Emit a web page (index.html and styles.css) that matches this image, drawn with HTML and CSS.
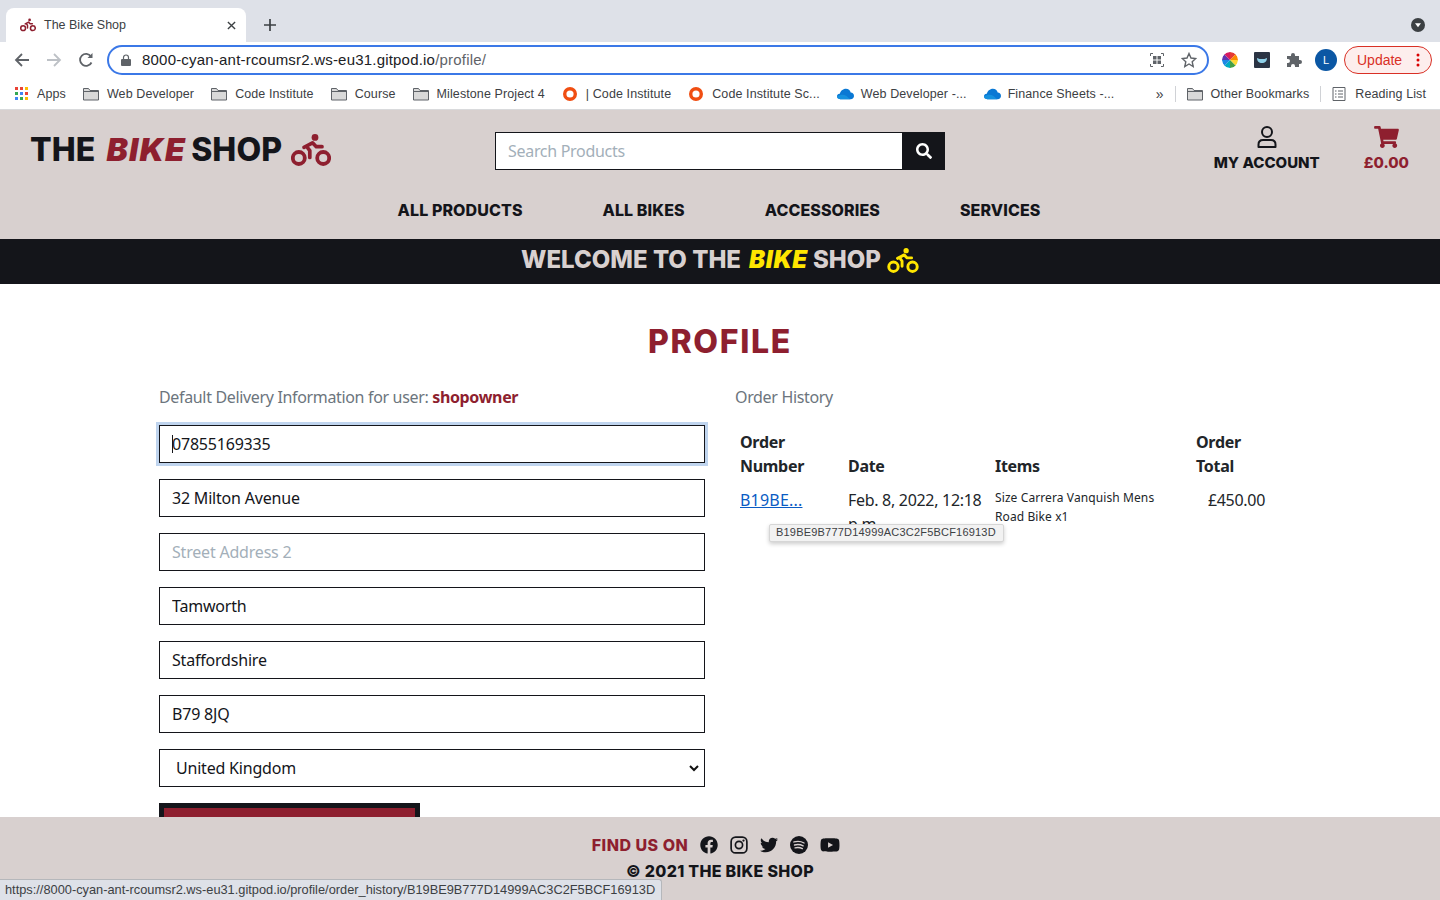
FILE: index.html
```html
<!DOCTYPE html>
<html lang="en">
<head>
    <meta charset="UTF-8">
    <title>The Bike Shop</title>
    <link rel="stylesheet" href="styles.css">
</head>
<body>
<svg class="defs" width="0" height="0">
    <symbol id="biker" viewBox="0 0 40 32">
        <circle cx="24" cy="3.4" r="3.4" fill="currentColor"/>
        <circle cx="7.8" cy="24" r="6" fill="none" stroke="currentColor" stroke-width="3.8"/>
        <circle cx="32.200" cy="24" r="6" fill="none" stroke="currentColor" stroke-width="3.800"/>
        <path d="M13 13.300L21.500 8.800L25.300 12.700H31M16 13L18.800 16.700V23.500" fill="none" stroke="currentColor" stroke-width="3.700" stroke-linecap="round" stroke-linejoin="round"/>
    </symbol>
    <symbol id="folder" viewBox="0 0 16 14">
        <path d="M.5 1.5h5l1.5 2h8.500v9.500h-15z" fill="#d9d9d9" stroke="#5f6368"/>
        <path d="M.5 4.500h15" stroke="#5f6368"/>
    </symbol>
    <symbol id="ring" viewBox="0 0 16 16">
        <circle cx="8" cy="8" r="5.300" fill="none" stroke="#f04e12" stroke-width="3.400"/>
    </symbol>
    <symbol id="cloud" viewBox="0 0 18 12">
        <path d="M3.500 11.500C1 11.500 0 10 0 8.500C0 6.800 1.500 5.500 3 5.800C4 2 7 .5 9.500 .5C12 .5 14 2 14.500 4.500C16.500 4.700 18 6.200 18 8C18 10 16.500 11.500 14.500 11.500z" fill="#0a78d4"/>
        <path d="M3.500 11.500C1 11.500 0 10 0 8.500C3 6.500 7 6 10 8L14 11.500z" fill="#1490df"/>
    </symbol>
</svg>

<!-- browser top -->
<div class="tabs">
    <div class="tab">
        <svg class="tabIcon"><use href="#biker"/></svg>
        <span class="tabTitle">The Bike Shop</span>
        <svg class="tabClose" viewBox="0 0 10 10"><path d="M1 1l8 8M9 1l-8 8" stroke="#3c4043" stroke-width="1.500"/></svg>
    </div>
    <svg class="newTab" viewBox="0 0 12 12"><path d="M6 0v12M0 6h12" stroke="#3c4043" stroke-width="1.700"/></svg>
    <div class="tabSearch"><svg viewBox="0 0 14 14"><circle cx="7" cy="7" r="7" fill="#3c4043"/><path d="M4 5.300h6l-3 4z" fill="#fff"/></svg></div>
</div>
<div class="toolbar">
    <svg class="navIcon" viewBox="0 0 16 16"><path d="M15 8H2M8 2L2 8l6 6" fill="none" stroke="#5f6368" stroke-width="1.800"/></svg>
    <svg class="navIcon" viewBox="0 0 16 16"><path d="M1 8h13M8 2l6 6-6 6" fill="none" stroke="#bdc1c6" stroke-width="1.800"/></svg>
    <svg class="navIcon" viewBox="0 0 16 16"><path d="M13.500 10.500A6 6 0 1 1 13 4.500" fill="none" stroke="#5f6368" stroke-width="1.800"/><path d="M14.500 1v5h-5z" fill="#5f6368"/></svg>
    <div class="omnibox">
        <svg class="lock" viewBox="0 0 10 12"><path d="M2.500 5V3.500a2.500 2.500 0 0 1 5 0V5" fill="none" stroke="#5f6368" stroke-width="1.200"/><rect y="5" width="10" height="7" rx="1" fill="#5f6368"/></svg>
        <span class="url">8000-cyan-ant-rcoumsr2.ws-eu31.gitpod.io<span class="urlPath">/profile/</span></span>
        <svg class="qr" viewBox="0 0 14 14"><path d="M.5 3V.5H3M11 .5h2.500V3M13.500 11v2.500H11M3 13.500H.5V11" fill="none" stroke="#5f6368"/><rect x="3" y="3" width="3.500" height="3.500" fill="#5f6368"/><rect x="7.500" y="3" width="3.500" height="3.500" fill="#5f6368"/><rect x="3" y="7.500" width="3.500" height="3.500" fill="#5f6368"/><rect x="7.500" y="7.500" width="3.500" height="3.500" fill="#5f6368"/></svg>
        <svg class="star" viewBox="0 0 16 16"><path d="M8 1.500l2 4.500 4.800.5-3.600 3.200 1 4.800L8 12l-4.200 2.500 1-4.800L1.200 6.500 6 6z" fill="none" stroke="#5f6368" stroke-width="1.400"/></svg>
    </div>
    <svg class="extIcon wheel" viewBox="0 0 16 16"><path d="M8 8V0a8 8 0 0 1 5.700 2.300z" fill="#e53935"/><path d="M8 8l5.700-5.700A8 8 0 0 1 16 8z" fill="#fb8c00"/><path d="M8 8h8a8 8 0 0 1-2.300 5.700z" fill="#fdd835"/><path d="M8 8l5.700 5.700A8 8 0 0 1 8 16z" fill="#43a047"/><path d="M8 8v8a8 8 0 0 1-5.700-2.300z" fill="#00acc1"/><path d="M8 8l-5.700 5.700A8 8 0 0 1 0 8z" fill="#1e88e5"/><path d="M8 8H0a8 8 0 0 1 2.300-5.700z" fill="#5e35b1"/><path d="M8 8L2.300 2.300A8 8 0 0 1 8 0z" fill="#d81b60"/></svg>
    <svg class="extIcon" viewBox="0 0 16 16"><rect width="16" height="16" rx="1" fill="#2b3444"/><path d="M3 6c2 1 3 1 5 1s3 0 5-1c0 3-2 5-5 5s-5-2-5-5z" fill="#8fd0e8"/></svg>
    <svg class="extIcon" viewBox="0 0 16 16"><path d="M1 4h4V3a2 2 0 0 1 4 0v1h4v4h1a2 2 0 0 1 0 4h-1v3H9v-1a2 2 0 0 0-4 0v1H1v-4h1a2 2 0 0 0 0-4H1z" fill="#5f6368"/></svg>
    <div class="avatar">L</div>
    <div class="update">
        <span>Update</span>
        <svg class="dots" viewBox="0 0 4 14"><circle cx="2" cy="2" r="1.500"/><circle cx="2" cy="7" r="1.500"/><circle cx="2" cy="12" r="1.500"/></svg>
    </div>
</div>
<div class="bookmarks">
    <div class="mark">
        <svg class="appsIcon" viewBox="0 0 14 14">
            <g fill="#ea4335"><rect width="3" height="3"/><rect x="5" width="3" height="3"/></g><rect x="10" width="3" height="3" fill="#fbbc04"/>
            <g fill="#34a853"><rect y="5" width="3" height="3"/></g><rect x="5" y="5" width="3" height="3" fill="#4285f4"/><rect x="10" y="5" width="3" height="3" fill="#ea4335"/>
            <g fill="#4285f4"><rect y="10" width="3" height="3"/></g><rect x="5" y="10" width="3" height="3" fill="#34a853"/><rect x="10" y="10" width="3" height="3" fill="#fbbc04"/>
        </svg>Apps
    </div>
    <div class="mark"><svg class="folder"><use href="#folder"/></svg>Web Developer</div>
    <div class="mark"><svg class="folder"><use href="#folder"/></svg>Code Institute</div>
    <div class="mark"><svg class="folder"><use href="#folder"/></svg>Course</div>
    <div class="mark"><svg class="folder"><use href="#folder"/></svg>Milestone Project 4</div>
    <div class="mark"><svg class="ring"><use href="#ring"/></svg>| Code Institute</div>
    <div class="mark"><svg class="ring"><use href="#ring"/></svg>Code Institute Sc...</div>
    <div class="mark"><svg class="cloud"><use href="#cloud"/></svg>Web Developer -...</div>
    <div class="mark"><svg class="cloud"><use href="#cloud"/></svg>Finance Sheets -...</div>
    <div class="marksEnd">
        <span class="more">»</span>
        <span class="markSep"></span>
        <div class="mark"><svg class="folder"><use href="#folder"/></svg>Other Bookmarks</div>
        <span class="markSep"></span>
        <div class="mark"><svg class="listIcon" viewBox="0 0 14 14"><path d="M1 .5h12v13H1z" fill="none" stroke="#5f6368"/><path d="M3 4h1.500M6 4h5M3 7h1.500M6 7h5M3 10h1.500M6 10h5" stroke="#5f6368"/></svg>Reading List</div>
    </div>
</div>

<!-- site header -->
<header class="siteHead">
    <div class="headTop">
        <a class="logo"><span>THE</span><em>BIKE</em><span>SHOP</span><svg class="logoBike"><use href="#biker"/></svg></a>
        <div class="search">
            <div class="searchBox">Search Products</div>
            <div class="searchBtn"><svg viewBox="0 0 512 512"><path fill="currentColor" d="M505 442.7L405.300 343c-4.500-4.500-10.600-7-17-7H372c27.600-35.300 44-79.700 44-128C416 93.100 322.900 0 208 0S0 93.100 0 208s93.100 208 208 208c48.300 0 92.700-16.400 128-44v16.300c0 6.400 2.500 12.500 7 17l99.700 99.700c9.400 9.400 24.600 9.400 33.900 0l28.300-28.300c9.400-9.400 9.400-24.600.1-34zM208 336c-70.700 0-128-57.200-128-128 0-70.700 57.200-128 128-128 70.700 0 128 57.200 128 128 0 70.700-57.200 128-128 128z"/></svg></div>
        </div>
        <div class="headLinks">
            <div class="headLink">
                <svg class="userIcon" viewBox="0 0 20 22"><circle cx="10" cy="6" r="5" fill="none" stroke="currentColor" stroke-width="2"/><path d="M1.500 21v-2.500c0-3 2-4.500 4.500-4.500h8c2.500 0 4.500 1.500 4.500 4.500V21z" fill="none" stroke="currentColor" stroke-width="2" stroke-linejoin="round"/></svg>
                <span>MY ACCOUNT</span>
            </div>
            <div class="headLink cart">
                <svg class="cartIcon" viewBox="0 0 576 512"><path fill="currentColor" d="M528.120 301.319l47.273-208C578.806 78.301 567.391 64 551.990 64H159.208l-9.166-44.810C147.758 8.021 137.930 0 126.529 0H24C10.745 0 0 10.745 0 24v16c0 13.255 10.745 24 24 24h69.883l70.248 343.435C147.325 417.100 136 435.222 136 456c0 30.928 25.072 56 56 56s56-25.072 56-56c0-15.674-6.447-29.835-16.824-40h209.647C430.447 426.165 424 440.326 424 456c0 30.928 25.072 56 56 56s56-25.072 56-56c0-22.172-12.888-41.332-31.579-50.405l5.517-24.276c3.413-15.018-8.002-29.319-23.403-29.319H218.117l-6.545-32h293.145c11.206 0 20.920-7.754 23.403-18.681z"/></svg>
                <span>£0.00</span>
            </div>
        </div>
    </div>
    <nav class="mainNav">
        <a>ALL PRODUCTS</a>
        <a>ALL BIKES</a>
        <a>ACCESSORIES</a>
        <a>SERVICES</a>
    </nav>
</header>
<div class="banner"><span>WELCOME TO THE</span><em>BIKE</em><span>SHOP</span><svg class="bannerBike"><use href="#biker"/></svg></div>

<!-- page content -->
<main class="content">
    <h1 class="pageTitle">PROFILE</h1>
    <div class="columns">
        <section class="formCol">
            <p class="colTitle">Default Delivery Information for user: <strong>shopowner</strong></p>
            <form class="profileForm">
                <input class="field isFocus" value="07855169335">
                <input class="field" value="32 Milton Avenue">
                <input class="field" placeholder="Street Address 2">
                <input class="field" value="Tamworth">
                <input class="field" value="Staffordshire">
                <input class="field" value="B79 8JQ">
                <div class="field selectField">
                    <span>United Kingdom</span>
                    <svg class="chevron" viewBox="0 0 10 7"><path d="M1 1l4 4 4-4" fill="none" stroke="#111" stroke-width="2"/></svg>
                </div>
                <div class="saveBtn"></div>
            </form>
        </section>
        <section class="historyCol">
            <p class="colTitle">Order History</p>
            <table class="orders">
                <thead>
                    <tr>
                        <th class="cNum">Order Number</th>
                        <th class="cDate">Date</th>
                        <th class="cItems">Items</th>
                        <th class="cTotal">Order Total</th>
                    </tr>
                </thead>
                <tbody>
                    <tr>
                        <td><a class="orderLink">B19BE...</a></td>
                        <td>Feb. 8, 2022, 12:18 p.m.</td>
                        <td class="itemsCell">Size Carrera Vanquish Mens Road Bike x1</td>
                        <td class="totalCell">£450.00</td>
                    </tr>
                </tbody>
            </table>
            <div class="tooltip">B19BE9B777D14999AC3C2F5BCF16913D</div>
        </section>
    </div>
</main>

<footer class="siteFoot">
    <div class="findUs">
        <span class="findText">FIND US ON</span>
        <svg class="social" viewBox="0 0 512 512"><path fill="currentColor" d="M504 256C504 119 393 8 256 8S8 119 8 256c0 123.780 90.690 226.380 209.250 245V327.690h-63V256h63v-54.640c0-62.150 37-96.480 93.670-96.480 27.140 0 55.520 4.840 55.520 4.840v61h-31.280c-30.800 0-40.410 19.120-40.410 38.730V256h68.780l-11 71.690h-57.780V501C413.310 482.380 504 379.780 504 256z"/></svg>
        <svg class="social" viewBox="0 0 16 16"><rect x="1" y="1" width="14" height="14" rx="4" fill="none" stroke="currentColor" stroke-width="1.500"/><circle cx="8" cy="8" r="3.200" fill="none" stroke="currentColor" stroke-width="1.500"/><circle cx="12" cy="4" r="1" fill="currentColor"/></svg>
        <svg class="social" viewBox="0 0 512 512"><path fill="currentColor" d="M459.370 151.716c.325 4.548.325 9.097.325 13.645 0 138.720-105.583 298.558-298.558 298.558-59.452 0-114.680-17.219-161.137-47.106 8.447.974 16.568 1.299 25.340 1.299 49.055 0 94.213-16.568 130.274-44.832-46.132-.975-84.792-31.188-98.112-72.772 6.498.974 12.995 1.624 19.818 1.624 9.421 0 18.843-1.300 27.614-3.573-48.081-9.747-84.143-51.980-84.143-102.985v-1.299c13.969 7.797 30.214 12.670 47.431 13.319-28.264-18.843-46.781-51.005-46.781-87.391 0-19.492 5.197-37.360 14.294-52.954 51.655 63.675 129.300 105.258 216.365 109.807-1.624-7.797-2.599-15.918-2.599-24.040 0-57.828 46.782-104.934 104.934-104.934 30.213 0 57.502 12.670 76.670 33.137 23.715-4.548 46.456-13.320 66.599-25.340-7.798 24.366-24.366 44.833-46.132 57.827 21.117-2.273 41.584-8.122 60.426-16.243-14.292 20.791-32.161 39.308-52.628 54.253z"/></svg>
        <svg class="social" viewBox="0 0 16 16"><circle cx="8" cy="8" r="8" fill="currentColor"/><path d="M3.500 5.300c3-.8 6.500-.5 9 .9M4 8c2.600-.7 5.500-.4 7.700.8M4.500 10.500c2.200-.5 4.600-.3 6.500.7" fill="none" stroke="#d8d0cf" stroke-width="1.200" stroke-linecap="round"/></svg>
        <svg class="social wide" viewBox="0 0 576 512"><path fill="currentColor" d="M549.655 124.083c-6.281-23.650-24.787-42.276-48.284-48.597C458.781 64 288 64 288 64S117.220 64 74.629 75.486c-23.497 6.322-42.003 24.947-48.284 48.597-11.412 42.867-11.412 132.305-11.412 132.305s0 89.438 11.412 132.305c6.281 23.650 24.787 41.500 48.284 47.821C117.220 448 288 448 288 448s170.780 0 213.371-11.486c23.497-6.321 42.003-24.171 48.284-47.821 11.412-42.867 11.412-132.305 11.412-132.305s0-89.438-11.412-132.305zm-317.510 213.508V175.185l142.739 81.205-142.739 81.201z"/></svg>
    </div>
    <div class="copyright">© 2021 THE BIKE SHOP</div>
</footer>
<div class="statusBar">https://8000-cyan-ant-rcoumsr2.ws-eu31.gitpod.io/profile/order_history/B19BE9B777D14999AC3C2F5BCF16913D</div>
</body>
</html>
```

FILE: styles.css
```css
*{
    box-sizing: border-box;
}
html,body{
    height: 100%;
}
body{
    margin: 0;
    height: 900px;
    overflow: hidden;
    display: flex;
    flex-direction: column;
    font-family: "Noto Sans", sans-serif;
    color: #212529;
    background: #fff;
}
.defs{
    position: absolute;
}
/*browser top*/
.tabs{
    height: 42px;
    flex: none;
    background: #dee1e8;
    display: flex;
    align-items: flex-end;
    padding-left: 6px;
}
.tab{
    width: 240px;
    height: 34px;
    background: #fff;
    border-radius: 8px 8px 0 0;
    display: flex;
    align-items: center;
    padding: 0 8px 0 14px;
    font: 12.5px "Liberation Sans", sans-serif;
    color: #3c4043;
}
.tabIcon{
    width: 16px;
    height: 14px;
    color: #8e1f2f;
    margin-right: 8px;
}
.tabTitle{
    flex: 1;
}
.tabClose{
    width: 9px;
    height: 9px;
    margin-right: 2px;
}
.newTab{
    width: 12px;
    height: 12px;
    margin: 0 0 11px 18px;
}
.tabSearch{
    margin: 0 15px 10px auto;
    height: 14px;
}
.tabSearch svg{
    width: 14px;
    height: 14px;
    display: block;
}
.toolbar{
    height: 36px;
    flex: none;
    background: #fff;
    display: flex;
    align-items: center;
    padding-left: 14px;
}
.navIcon{
    width: 16px;
    height: 16px;
    margin-right: 16px;
}
.omnibox{
    width: 1102px;
    height: 30px;
    margin-left: -3px;
    border: 2px solid #3b78e7;
    border-radius: 15px;
    display: flex;
    align-items: center;
    padding: 0 10px 0 12px;
}
.lock{
    width: 10px;
    height: 12px;
    margin-right: 11px;
}
.url{
    flex: 1;
    font: 15px "Liberation Sans", sans-serif;
    letter-spacing: .2px;
    color: #202124;
    padding-bottom: 1px;
}
.urlPath{
    color: #5f6368;
}
.qr{
    width: 14px;
    height: 14px;
    margin-right: 17px;
}
.star{
    width: 16px;
    height: 16px;
}
.extIcon{
    width: 16px;
    height: 16px;
    margin-left: 16px;
}
.wheel{
    margin-left: 13px;
    border-radius: 50%;
}
.avatar{
    width: 22px;
    height: 22px;
    margin-left: 13px;
    border-radius: 50%;
    background: #0b57a4;
    color: #fff;
    font: 11px/22px "Liberation Sans", sans-serif;
    text-align: center;
}
.update{
    width: 88px;
    height: 28px;
    margin-left: 7px;
    border: 1px solid #d93025;
    border-radius: 14px;
    background: #fdeeed;
    color: #d93025;
    font: 14px "Liberation Sans", sans-serif;
    display: flex;
    align-items: center;
    justify-content: space-between;
    padding: 0 11px 0 12px;
}
.dots{
    width: 4px;
    height: 14px;
    fill: #d90000;
}
.bookmarks{
    height: 32px;
    flex: none;
    background: #fff;
    border-bottom: 1px solid #d9dadc;
    display: flex;
    align-items: center;
    padding-left: 15px;
    gap: 17px;
    font: 12.5px "Liberation Sans", sans-serif;
    letter-spacing: .1px;
    color: #3c4043;
}
.mark{
    display: flex;
    align-items: center;
    white-space: nowrap;
}
.appsIcon{
    width: 14px;
    height: 14px;
    margin-right: 8px;
}
.folder{
    width: 16px;
    height: 14px;
    margin-right: 8px;
}
.ring{
    width: 16px;
    height: 16px;
    margin-right: 8px;
}
.cloud{
    width: 17px;
    height: 12px;
    margin-right: 7px;
}
.listIcon{
    width: 14px;
    height: 14px;
    margin-right: 9px;
}
.marksEnd{
    margin-left: auto;
    display: flex;
    align-items: center;
    gap: 11px;
    padding-right: 14px;
}
.more{
    font-size: 14px;
}
.markSep{
    width: 1px;
    height: 16px;
    background: #d0d2d6;
}
/*site header*/
.siteHead{
    flex: none;
    height: 129px;
    background: #d8d0cf;
    color: #14151a;
    font-family: Inter, sans-serif;
    font-weight: 800;
}
.headTop{
    display: grid;
    grid-template-columns: 1fr 450px 1fr;
    align-items: center;
    height: 80px;
    padding: 0 31px 0 30px;
}
.logo{
    font-size: 32px;
    line-height: 1;
    white-space: nowrap;
    display: flex;
    align-items: center;
    letter-spacing: .1px;
}
.logo em,.banner em{
    font-style: italic;
    font-weight: 900;
}
.logo em{
    color: #8e1f2f;
    margin: 0 5px 0 11px;
    letter-spacing: 1.2px;
}
.logoBike{
    width: 40px;
    height: 32px;
    color: #8e1f2f;
    margin-left: 9px;
}
.search{
    display: flex;
    height: 38px;
    margin-top: 1px;
    position: relative;
    left: .5px;
}
.searchBox{
    flex: 1;
    background: #fff;
    border: 1px solid #14151a;
    font: 16px/36px "Noto Sans", sans-serif;
    letter-spacing: -.3px;
    color: #a3afb9;
    padding-left: 12px;
}
.searchBtn{
    width: 42px;
    background: #14151a;
    color: #fff;
    display: flex;
    align-items: center;
    justify-content: center;
}
.searchBtn svg{
    width: 16px;
    height: 16px;
}
.headLinks{
    display: flex;
    justify-content: flex-end;
    gap: 44px;
    margin-top: -2px;
}
.headLink{
    display: flex;
    flex-direction: column;
    align-items: center;
    font-size: 15px;
    line-height: 20px;
}
.userIcon{
    width: 20px;
    height: 22px;
    margin-bottom: 5px;
}
.cart{
    color: #8e1f2f;
}
.cartIcon{
    width: 25px;
    height: 22px;
    margin-bottom: 5px;
}
.mainNav{
    display: flex;
    justify-content: center;
    gap: 80px;
    font-size: 16px;
    line-height: 20px;
    letter-spacing: .1px;
    padding: 10px 2px 0 0;
}
.banner{
    flex: none;
    height: 45px;
    background: #14151a;
    color: #d8d0cf;
    font: 800 24px/42px Inter, sans-serif;
    padding-bottom: 3px;
    display: flex;
    align-items: center;
    justify-content: center;
    white-space: nowrap;
}
.banner em{
    color: #ffe600;
    margin: 0 5px 0 8px;
    letter-spacing: .7px;
}
.bannerBike{
    width: 32px;
    height: 25px;
    color: #ffe600;
    margin-left: 6px;
}
/*page content*/
.content{
    flex: 1;
    overflow: hidden;
    min-height: 0;
    padding: 0 150px;
}
.pageTitle{
    margin: 40px 0 0;
    font: 800 32px/36px Inter, sans-serif;
    letter-spacing: 1.7px;
    color: #8e1f2f;
    text-align: center;
}
.columns{
    display: flex;
    gap: 30px;
    margin-top: 25px;
    padding-left: 9px;
}
.formCol{
    width: 546px;
    flex: none;
}
.historyCol{
    flex: 1;
    position: relative;
}
.colTitle{
    margin: 0 0 16px;
    font-size: 16px;
    line-height: 24px;
    letter-spacing: -.34px;
    color: #6c757d;
}
.colTitle strong{
    color: #8e1f2f;
    font-weight: 700;
}
.profileForm{
    display: flex;
    flex-direction: column;
    gap: 16px;
}
.field{
    width: 100%;
    height: 38px;
    border: 1px solid #14151a;
    background: #fff;
    padding: 0 12px;
    font: 16px "Noto Sans", sans-serif;
    letter-spacing: -.2px;
    color: #14151a;
    border-radius: 0;
    outline: none;
}
.field::placeholder{
    color: #a3afb9;
}
/*caret sits on the first digit*/
.isFocus{
    background: linear-gradient(#14151a,#14151a) 12px center / 1px 18px no-repeat #fff;
    box-shadow: 0 0 0 3px #bfd4ee;
}
.selectField{
    display: flex;
    align-items: center;
    justify-content: space-between;
    padding: 0 5px 0 16px;
}
.chevron{
    width: 10px;
    height: 7px;
}
.saveBtn{
    width: 261px;
    height: 48px;
    border: 5px solid #14151a;
    background: #8e1f2f;
}
.orders{
    width: 540px;
    table-layout: fixed;
    border-collapse: collapse;
    margin-top: 4px;
}
.cNum{
    width: 108px;
}
.cDate{
    width: 147px;
}
.cItems{
    width: 201px;
}
.cTotal{
    width: 84px;
}
.orders th{
    padding: 5px;
    font-size: 16px;
    line-height: 24px;
    font-weight: 700;
    letter-spacing: -.3px;
    text-align: left;
    vertical-align: bottom;
}
.orders td{
    padding: 5px;
    font-size: 16px;
    line-height: 24px;
    letter-spacing: -.3px;
    vertical-align: top;
}
.orderLink{
    color: #0b5cc4;
    text-decoration: underline;
    letter-spacing: .2px;
}
.orders .itemsCell{
    font-size: 12px;
    line-height: 19px;
    letter-spacing: .1px;
    padding-right: 30px;
}
.orders .totalCell{
    text-align: right;
    padding-right: 10px;
}
.tooltip{
    position: absolute;
    left: 34px;
    top: 139px;
    height: 18px;
    padding: 0 7px 0 6px;
    background: #f2f2f2;
    border: 1px solid #d6d6d6;
    border-radius: 2px;
    box-shadow: 0 2px 4px rgba(0,0,0,.2);
    font: 11px/15px "Liberation Sans", sans-serif;
    letter-spacing: .2px;
    color: #3c4043;
    white-space: nowrap;
}
/*footer*/
.siteFoot{
    flex: none;
    height: 83px;
    background: #d8d0cf;
    color: #14151a;
    font-family: Inter, sans-serif;
    font-weight: 800;
    font-size: 16px;
    text-align: center;
    padding-top: 18px;
}
.findUs{
    display: flex;
    justify-content: center;
    align-items: center;
    gap: 12px;
    height: 20px;
    padding-right: 8px;
}
.findText{
    color: #8e1f2f;
    letter-spacing: .5px;
}
.social{
    width: 18px;
    height: 18px;
}
.wide{
    width: 20px;
}
.copyright{
    line-height: 20px;
    margin-top: 6px;
    letter-spacing: .3px;
}
.statusBar{
    position: absolute;
    left: 0;
    bottom: 0;
    height: 21px;
    padding: 0 6px 0 5px;
    background: #dee1e8;
    border: 1px solid #b5b7bb;
    border-width: 1px 1px 0 0;
    border-radius: 0 3px 0 0;
    font: 12.8px/20px "Liberation Sans", sans-serif;
    color: #3c4043;
    white-space: nowrap;
}
```
